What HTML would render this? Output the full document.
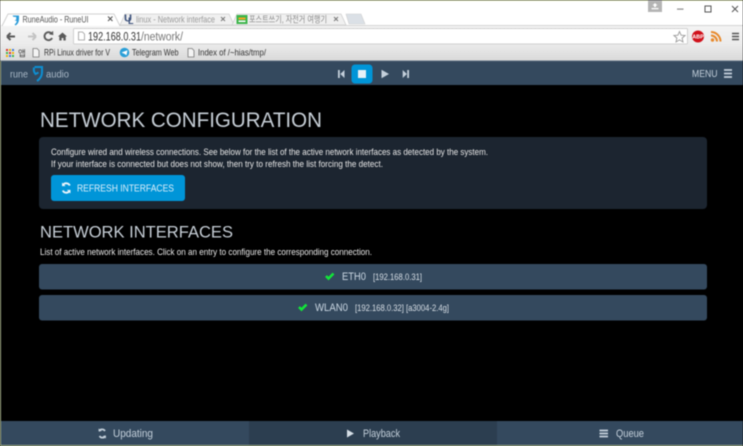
<!DOCTYPE html>
<html><head><meta charset="utf-8"><title>RuneAudio - RuneUI</title>
<style>
html,body{margin:0;padding:0;background:#000;width:743px;height:446px;overflow:hidden}
svg{display:block;filter:blur(0.4px)}
text{font-family:"Liberation Sans","Noto Sans CJK KR",sans-serif;white-space:pre}
</style></head><body>
<svg width="743" height="446" viewBox="0 0 743 446" xmlns="http://www.w3.org/2000/svg">
<defs>
<linearGradient id="tb" x1="0" y1="0" x2="0" y2="1"><stop offset="0" stop-color="#f4f4f4"/><stop offset="0.5" stop-color="#ececec"/><stop offset="1" stop-color="#d9d9d9"/></linearGradient>
</defs>
<rect width="743" height="446" fill="#000"/>
<!-- chrome -->
<rect width="743" height="26" fill="#fff"/>
<rect y="25" width="743" height="36" fill="url(#tb)"/>
<rect y="0" width="743" height="1" fill="#d6deb0"/>
<rect y="25" x="118" width="625" height="1" fill="#d4d4d4"/>
<path d="M120 25l5-11h104l5 11z" fill="#f0f0f0" stroke="#cfcfcf" stroke-width=".8"/>
<path d="M232 25l5-11h104l5 11z" fill="#f0f0f0" stroke="#cfcfcf" stroke-width=".8"/>
<path d="M346 14h15l4 10h-16z" fill="#dbe0e6" stroke="#cfcfcf" stroke-width=".6"/>
<path d="M2 26l6-12h106l6 12" fill="#fff" stroke="#c4c4c4" stroke-width=".8"/>
<path d="M12.500 15.500h6.500v3.500q0 4.500-3.500 6.500l-1-1q2-1.500 2.300-3.500l-2.300-.5 1.700-.8v-2.800h-2.700z" fill="#2a9bd8"/>
<text x="22.500" y="22.500" font-size="9.500" fill="#555" textLength="66" lengthAdjust="spacingAndGlyphs">RuneAudio - RuneUI</text>
<path d="M108 16.500l4.500 4.500M112.500 16.500l-4.500 4.500" stroke="#555" stroke-width="1.100"/>
<text x="124" y="21.500" font-size="10" font-weight="bold" fill="#3a4f7a" textLength="8" lengthAdjust="spacingAndGlyphs">U</text>
<text x="128" y="24" font-size="9" font-weight="bold" fill="#3a4f7a">L</text>
<text x="136" y="22.500" font-size="9.500" fill="#9a9a9a" textLength="79" lengthAdjust="spacingAndGlyphs">linux - Network interface</text>
<path d="M221 17l4 4M225 17l-4 4" stroke="#777" stroke-width="1"/>
<rect x="236.500" y="15" width="11" height="9" fill="#3cb54a"/><rect x="238.500" y="17.500" width="7" height="2" fill="#f6a623"/><rect x="238.500" y="20.500" width="7" height="1.500" fill="#fff"/>
<text x="249" y="22.500" font-size="9" fill="#8a8a8a" textLength="78" lengthAdjust="spacingAndGlyphs">포스트쓰기, 자전거 여행기</text>
<path d="M334 17l4 4M338 17l-4 4" stroke="#777" stroke-width="1"/>
<!-- window controls -->
<rect x="648" y="0" width="14" height="12" fill="#b4b4b4"/>
<path d="M655 3l2.500 2.500h-1.500v1.500h-2v-1.500h-1.500zM651.500 8h7v1.200h-7z" fill="#fff"/>
<rect x="677" y="8.500" width="6.500" height="1.200" fill="#8a8a8a"/>
<rect x="705" y="6" width="6" height="6" fill="none" stroke="#555" stroke-width="1"/>
<path d="M732 6l6 6M738 6l-6 6" stroke="#555" stroke-width="1"/>
<!-- nav buttons -->
<path d="M7 36.500h8M7 36.500l3.500-3.500M7 36.500l3.500 3.500" stroke="#5a5a5a" stroke-width="2" fill="none"/>
<path d="M36 36.500h-8M36 36.500l-3.500-3.500M36 36.500l-3.500 3.500" stroke="#c4c4c4" stroke-width="2" fill="none"/>
<path d="M51.500 33.500a4 4 0 1 0 .6 4.500" stroke="#5a5a5a" stroke-width="1.900" fill="none"/><path d="M49 34.300l4.300.8-.2-4.200z" fill="#5a5a5a"/>
<path d="M58 36.500l4.500-4 4.500 4h-1.300v4h-2.300v-2.500h-1.800v2.500h-2.300v-4z" fill="#5a5a5a"/>
<rect x="73.500" y="28.500" width="614" height="15.500" rx="1" fill="#fff" stroke="#d0d0d0"/>
<path d="M78.500 32h4l2 2v6h-6z" fill="#fff" stroke="#999" stroke-width=".8"/>
<text x="88" y="40.500" font-size="11.500" fill="#333" textLength="53" lengthAdjust="spacingAndGlyphs">192.168.0.31</text>
<text x="141" y="40.500" font-size="11.500" fill="#777" textLength="42" lengthAdjust="spacingAndGlyphs">/network/</text>
<path d="M679.500 31.500l1.600 3.700 4 .3-3 2.600.9 3.900-3.500-2.100-3.500 2.100.9-3.900-3-2.600 4-.3z" fill="#fff" stroke="#9a9a9a" stroke-width=".9"/>
<circle cx="698" cy="36.500" r="6" fill="#d0111b"/>
<text x="698" y="38.500" font-size="5.500" font-weight="bold" fill="#fff" text-anchor="middle">ABP</text>
<circle cx="712.500" cy="40" r="1.700" fill="#e8892b"/>
<path d="M711 35.500a6 6 0 0 1 6 6M711 32a9.500 9.500 0 0 1 9.500 9.500" stroke="#e8892b" stroke-width="2" fill="none"/>
<path d="M732 33.500h7M732 36.500h7M732 39.500h7" stroke="#555" stroke-width="1.600"/>
<!-- bookmarks -->
<g fill="#d9342b"><rect x="6" y="49" width="2" height="2"/><rect x="12" y="49" width="2" height="2" fill="#3c78d8"/><rect x="9" y="49" width="2" height="2" fill="#f2b300"/><rect x="6" y="52" width="2" height="2" fill="#3cb54a"/><rect x="9" y="52" width="2" height="2"/><rect x="12" y="52" width="2" height="2" fill="#f2b300"/><rect x="6" y="55" width="2" height="2" fill="#f2b300"/><rect x="9" y="55" width="2" height="2" fill="#3c78d8"/><rect x="12" y="55" width="2" height="2" fill="#3cb54a"/></g>
<text x="18" y="56.500" font-size="8.500" fill="#444">앱</text>
<path d="M33 48.500h4l2 2v6.500h-6z" fill="#f4f4f4" stroke="#777" stroke-width=".8"/>
<text x="44" y="55.500" font-size="9.500" fill="#333" textLength="66" lengthAdjust="spacingAndGlyphs">RPi Linux driver for V</text>
<circle cx="124.500" cy="52.500" r="4.800" fill="#2a9fd8"/><path d="M121.500 52.500l6-2.300-1 5-2-1.300z" fill="#fff"/>
<text x="132" y="55.500" font-size="9.500" fill="#333" textLength="46.500" lengthAdjust="spacingAndGlyphs">Telegram Web</text>
<path d="M188 48.500h4l2 2v6.500h-6z" fill="#f4f4f4" stroke="#777" stroke-width=".8"/>
<text x="198" y="55.500" font-size="9.500" fill="#333" textLength="68" lengthAdjust="spacingAndGlyphs">Index of /~hias/tmp/</text>
<!-- rune nav -->
<rect y="61" width="743" height="24" fill="#34495e"/>
<rect y="60.500" width="743" height="1" fill="#5a6b7c"/>
<text x="10" y="77.500" font-size="10.500" fill="#a8b7c5" textLength="18" lengthAdjust="spacingAndGlyphs">rune</text>
<text x="46" y="77.500" font-size="10.500" fill="#a8b7c5" textLength="23" lengthAdjust="spacingAndGlyphs">audio</text>
<path d="M34.500 67h7.500v5.500q0 5-5 8.500M34 67.500q-.8 4 1.500 6.500l3-1.500" stroke="#0d8fd3" stroke-width="2" fill="none"/>
<rect x="351.500" y="64.500" width="21" height="19" rx="3.500" fill="#0095d8"/>
<rect x="358" y="70" width="8" height="8" fill="#e6f0f7"/>
<path d="M338 70h1.800v8H338zM344.500 70v8l-4.200-4z" fill="#c4d0db"/>
<path d="M381.500 69.800l7.500 4.200-7.500 4.200z" fill="#c4d0db"/>
<path d="M409 70h-1.800v8h1.800zM402.700 70v8l4.200-4z" fill="#c4d0db"/>
<text x="692" y="77" font-size="10" fill="#c4d0db" textLength="25.500" lengthAdjust="spacingAndGlyphs">MENU</text>
<path d="M724 70h8M724 73.500h8M724 77h8" stroke="#c4d0db" stroke-width="1.700"/>
<!-- content -->
<rect x="0" y="61" width="1" height="385" fill="#a9b48c"/>
<text x="40" y="127" font-size="21.500" fill="#c6ced6" textLength="282" lengthAdjust="spacingAndGlyphs">NETWORK CONFIGURATION</text>
<rect x="39" y="137" width="668" height="72" rx="4" fill="#1c2530"/>
<text x="51" y="155" font-size="9.300" fill="#e8e8e8" textLength="437" lengthAdjust="spacingAndGlyphs">Configure wired and wireless connections. See below for the list of the active network interfaces as detected by the system.</text>
<text x="51" y="167" font-size="9.300" fill="#e8e8e8" textLength="332" lengthAdjust="spacingAndGlyphs">If your interface is connected but does not show, then try to refresh the list forcing the detect.</text>
<rect x="51" y="175" width="134" height="26" rx="3" fill="#0095d8"/>
<path d="M69.800 185.500a3.900 3.900 0 0 0-6.700-.6M62.800 190.500a3.900 3.900 0 0 0 6.700.6" stroke="#e8f4fb" stroke-width="1.900" fill="none"/>
<path d="M62 182.500v3.600h3.600zM70.500 193.500v-3.600h-3.600z" fill="#e8f4fb"/>
<text x="77" y="191.500" font-size="10" fill="#dceefa" textLength="97" lengthAdjust="spacingAndGlyphs">REFRESH INTERFACES</text>
<text x="40" y="237.500" font-size="17" fill="#c6ced6" textLength="193" lengthAdjust="spacingAndGlyphs">NETWORK INTERFACES</text>
<text x="40" y="255" font-size="9.300" fill="#e8e8e8" textLength="332" lengthAdjust="spacingAndGlyphs">List of active network interfaces. Click on an entry to configure the corresponding connection.</text>
<rect x="39" y="264" width="668" height="25.500" rx="3" fill="#34495e"/>
<rect x="39" y="295" width="668" height="25.500" rx="3" fill="#34495e"/>
<path d="M326 276l2.500 2.500 5-5" stroke="#12e638" stroke-width="2.600" fill="none"/>
<text x="342" y="280" font-size="10.800" fill="#c9d6e2" textLength="24" lengthAdjust="spacingAndGlyphs">ETH0</text>
<text x="373" y="280" font-size="9" fill="#d8dfe6" textLength="49" lengthAdjust="spacingAndGlyphs">[192.168.0.31]</text>
<path d="M299 307l2.500 2.500 5-5" stroke="#12e638" stroke-width="2.600" fill="none"/>
<text x="315" y="311" font-size="10.800" fill="#c9d6e2" textLength="33" lengthAdjust="spacingAndGlyphs">WLAN0</text>
<text x="355" y="311" font-size="9" fill="#d8dfe6" textLength="94" lengthAdjust="spacingAndGlyphs">[192.168.0.32] [a3004-2.4g]</text>
<!-- footer -->
<rect x="1" y="421" width="248" height="24" fill="#34495e"/>
<rect x="249" y="421" width="248" height="24" fill="#2c3e50"/>
<rect x="497" y="421" width="246" height="24" fill="#34495e"/>
<rect x="0" y="445" width="743" height="1" fill="#b4c49a"/>
<path d="M105 431a3.500 3.500 0 0 0-6 0M99.500 436a3.500 3.500 0 0 0 6 0" stroke="#c4d0db" stroke-width="1.700" fill="none"/>
<path d="M98.500 428.500l.4 3.300 3-1zM106 438.500l-.4-3.300-3 1z" fill="#c4d0db"/>
<text x="113" y="437" font-size="10.800" fill="#c4d0db" textLength="40" lengthAdjust="spacingAndGlyphs">Updating</text>
<path d="M347 429.500l7 4-7 4z" fill="#d5dee6"/>
<text x="363" y="437" font-size="10.800" fill="#c4d0db" textLength="37" lengthAdjust="spacingAndGlyphs">Playback</text>
<path d="M599.500 430.500h8.500M599.500 433.500h8.500M599.500 436.500h8.500" stroke="#c4d0db" stroke-width="1.800"/>
<text x="616" y="437" font-size="10.800" fill="#c4d0db" textLength="28" lengthAdjust="spacingAndGlyphs">Queue</text>
</svg>
</body></html>
